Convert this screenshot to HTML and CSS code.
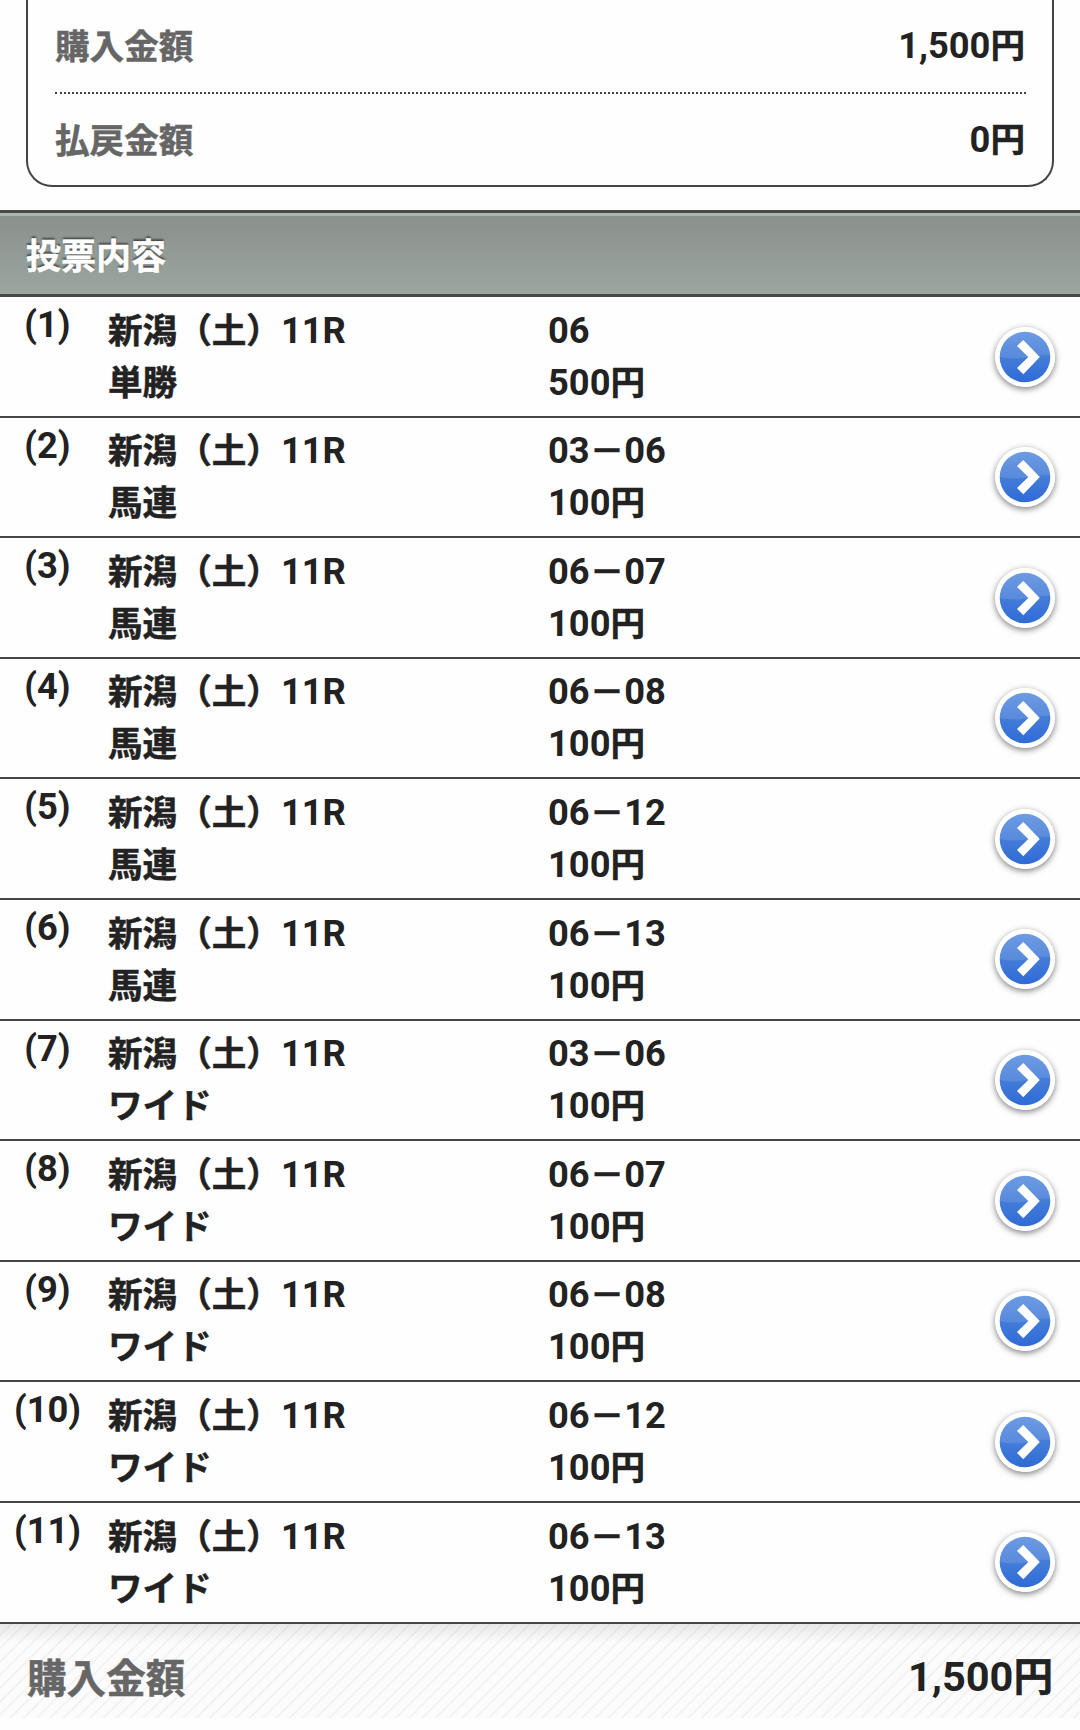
FILE: index.html
```html
<!DOCTYPE html>
<html lang="ja">
<head>
<meta charset="UTF-8" />
<meta name="viewport" content="width=device-width, initial-scale=1" />
<title>投票内容</title>
<link rel="stylesheet" href="styles.css">
</head>
<body>

<svg class="defs" width="0" height="0">
  <defs>
    <linearGradient id="blue" x1="0" y1="0" x2="0" y2="1">
      <stop offset="0" stop-color="#6a9ae2" />
      <stop offset="0.5" stop-color="#447cd8" />
      <stop offset="1" stop-color="#2e6bd6" />
    </linearGradient>
    <linearGradient id="gloss" x1="0" y1="0" x2="0" y2="1">
      <stop offset="0" stop-color="#fff" stop-opacity="0.02" />
      <stop offset="1" stop-color="#fff" stop-opacity="0.12" />
    </linearGradient>
    <symbol id="arrow" viewBox="0 0 60 60">
      <circle cx="30" cy="30" r="30" fill="#fff" />
      <circle cx="30" cy="30" r="25.3" fill="url(#blue)" />
      <path d="M4.7 30A25.3 25.3 0 0 1 55.3 28C43 25 30 35 4.7 30Z" fill="url(#gloss)" />
      <path d="M28.3 13L44.8 30L28.3 47.2L22 41L33.3 30L22 19Z" fill="#fff" />
    </symbol>
  </defs>
</svg>

<div class="summary">
  <dl>
    <dt>購入金額</dt>
    <dd>1,500<span class="ja">円</span></dd>
  </dl>
  <dl>
    <dt>払戻金額</dt>
    <dd>0<span class="ja">円</span></dd>
  </dl>
</div>

<h2>投票内容</h2>

<ul class="bets">
  <li>
    <div class="no">(1)</div>
    <div class="race"><p><span class="ja">新潟（土）</span>11R</p><p><span class="ja">単勝</span></p></div>
    <div class="pick"><p>06</p><p>500<span class="ja">円</span></p></div>
    <svg class="arrow"><use href="#arrow" /></svg>
  </li>
  <li>
    <div class="no">(2)</div>
    <div class="race"><p><span class="ja">新潟（土）</span>11R</p><p><span class="ja">馬連</span></p></div>
    <div class="pick"><p>03<span class="ja">－</span>06</p><p>100<span class="ja">円</span></p></div>
    <svg class="arrow"><use href="#arrow" /></svg>
  </li>
  <li>
    <div class="no">(3)</div>
    <div class="race"><p><span class="ja">新潟（土）</span>11R</p><p><span class="ja">馬連</span></p></div>
    <div class="pick"><p>06<span class="ja">－</span>07</p><p>100<span class="ja">円</span></p></div>
    <svg class="arrow"><use href="#arrow" /></svg>
  </li>
  <li>
    <div class="no">(4)</div>
    <div class="race"><p><span class="ja">新潟（土）</span>11R</p><p><span class="ja">馬連</span></p></div>
    <div class="pick"><p>06<span class="ja">－</span>08</p><p>100<span class="ja">円</span></p></div>
    <svg class="arrow"><use href="#arrow" /></svg>
  </li>
  <li>
    <div class="no">(5)</div>
    <div class="race"><p><span class="ja">新潟（土）</span>11R</p><p><span class="ja">馬連</span></p></div>
    <div class="pick"><p>06<span class="ja">－</span>12</p><p>100<span class="ja">円</span></p></div>
    <svg class="arrow"><use href="#arrow" /></svg>
  </li>
  <li>
    <div class="no">(6)</div>
    <div class="race"><p><span class="ja">新潟（土）</span>11R</p><p><span class="ja">馬連</span></p></div>
    <div class="pick"><p>06<span class="ja">－</span>13</p><p>100<span class="ja">円</span></p></div>
    <svg class="arrow"><use href="#arrow" /></svg>
  </li>
  <li>
    <div class="no">(7)</div>
    <div class="race"><p><span class="ja">新潟（土）</span>11R</p><p><span class="ja">ワイド</span></p></div>
    <div class="pick"><p>03<span class="ja">－</span>06</p><p>100<span class="ja">円</span></p></div>
    <svg class="arrow"><use href="#arrow" /></svg>
  </li>
  <li>
    <div class="no">(8)</div>
    <div class="race"><p><span class="ja">新潟（土）</span>11R</p><p><span class="ja">ワイド</span></p></div>
    <div class="pick"><p>06<span class="ja">－</span>07</p><p>100<span class="ja">円</span></p></div>
    <svg class="arrow"><use href="#arrow" /></svg>
  </li>
  <li>
    <div class="no">(9)</div>
    <div class="race"><p><span class="ja">新潟（土）</span>11R</p><p><span class="ja">ワイド</span></p></div>
    <div class="pick"><p>06<span class="ja">－</span>08</p><p>100<span class="ja">円</span></p></div>
    <svg class="arrow"><use href="#arrow" /></svg>
  </li>
  <li>
    <div class="no">(10)</div>
    <div class="race"><p><span class="ja">新潟（土）</span>11R</p><p><span class="ja">ワイド</span></p></div>
    <div class="pick"><p>06<span class="ja">－</span>12</p><p>100<span class="ja">円</span></p></div>
    <svg class="arrow"><use href="#arrow" /></svg>
  </li>
  <li>
    <div class="no">(11)</div>
    <div class="race"><p><span class="ja">新潟（土）</span>11R</p><p><span class="ja">ワイド</span></p></div>
    <div class="pick"><p>06<span class="ja">－</span>13</p><p>100<span class="ja">円</span></p></div>
    <svg class="arrow"><use href="#arrow" /></svg>
  </li>
</ul>

<dl class="total">
  <dt>購入金額</dt>
  <dd>1,500<span class="ja">円</span></dd>
</dl>

</body>
</html>
```

FILE: styles.css
```css
* {
  box-sizing: border-box;
}
body {
  margin: 0;
  background: #fefefe;
  color: #222;
  font-family: Roboto, "Noto Sans CJK JP", sans-serif;
  font-size: 36.3px;
  font-weight: 700;
  line-height: 52px;
}
p, dl, dd, ul, h2 {
  margin: 0;
  padding: 0;
}
.defs {
  display: block;
}
/* kanji run slightly smaller than the digits */
.ja, dt, h2 {
  font-family: "Noto Sans CJK JP", sans-serif;
  font-size: 34.6px;
  font-weight: 700;
  line-height: 1;
  -webkit-text-stroke: 0.5px currentColor;
}
dl {
  display: flex;
  justify-content: space-between;
  align-items: center;
}
dt {
  color: #666;
  padding-bottom: 3px;
}

.summary {
  height: 187px;
  margin: 0 26px;
  padding: 0 26px 0 27px;
  border: 2px solid #444;
  border-top: none;
  border-radius: 0 0 26px 26px;
}
.summary dl {
  height: 92px;
}
.summary dl:first-child {
  height: 94px;
  border-bottom: 2px dotted #444;
}
.summary dd {
  padding-right: 1px;
}

h2 {
  height: 87px;
  margin-top: 23px;
  padding-left: 26px;
  border-top: 3px solid #444a48;
  border-bottom: 3px solid #444a48;
  background: linear-gradient(#8a908c, #9ba69f);
  box-shadow: inset 0 3px 0 #a9b6b0;
  color: #fff;
  font-size: 35px;
  line-height: 81px;
  text-shadow: 0 -2px 2px #444;
}

.bets {
  list-style: none;
}
.bets li {
  display: flex;
  height: 120.6px;
  border-bottom: 2px solid #444;
}
.no {
  width: 95px;
  padding-top: 2px;
  text-align: center;
}
.race {
  width: 440px;
  padding: 7.6px 0 0 13px;
}
.pick {
  flex: 1;
  padding: 7.6px 0 0 13px;
}
.arrow {
  width: 60px;
  height: 60px;
  margin: 29.5px 25px 0 0;
  border-radius: 50%;
  box-shadow: 0 2px 6px rgba(0, 0, 0, 0.5);
}

.total {
  height: 94px;
  padding: 13px 27px 0 27px;
  background:
    linear-gradient(rgba(0, 0, 0, 0.08), rgba(0, 0, 0, 0) 20px),
    repeating-linear-gradient(135deg, #fcfcfc 0, #fcfcfc 6.5px, #f2f2f2 7.5px, #f2f2f2 8.4px, #fcfcfc 9.4px);
  font-size: 41.5px;
}
.total dt, .total .ja {
  font-size: 39.6px;
}
```
